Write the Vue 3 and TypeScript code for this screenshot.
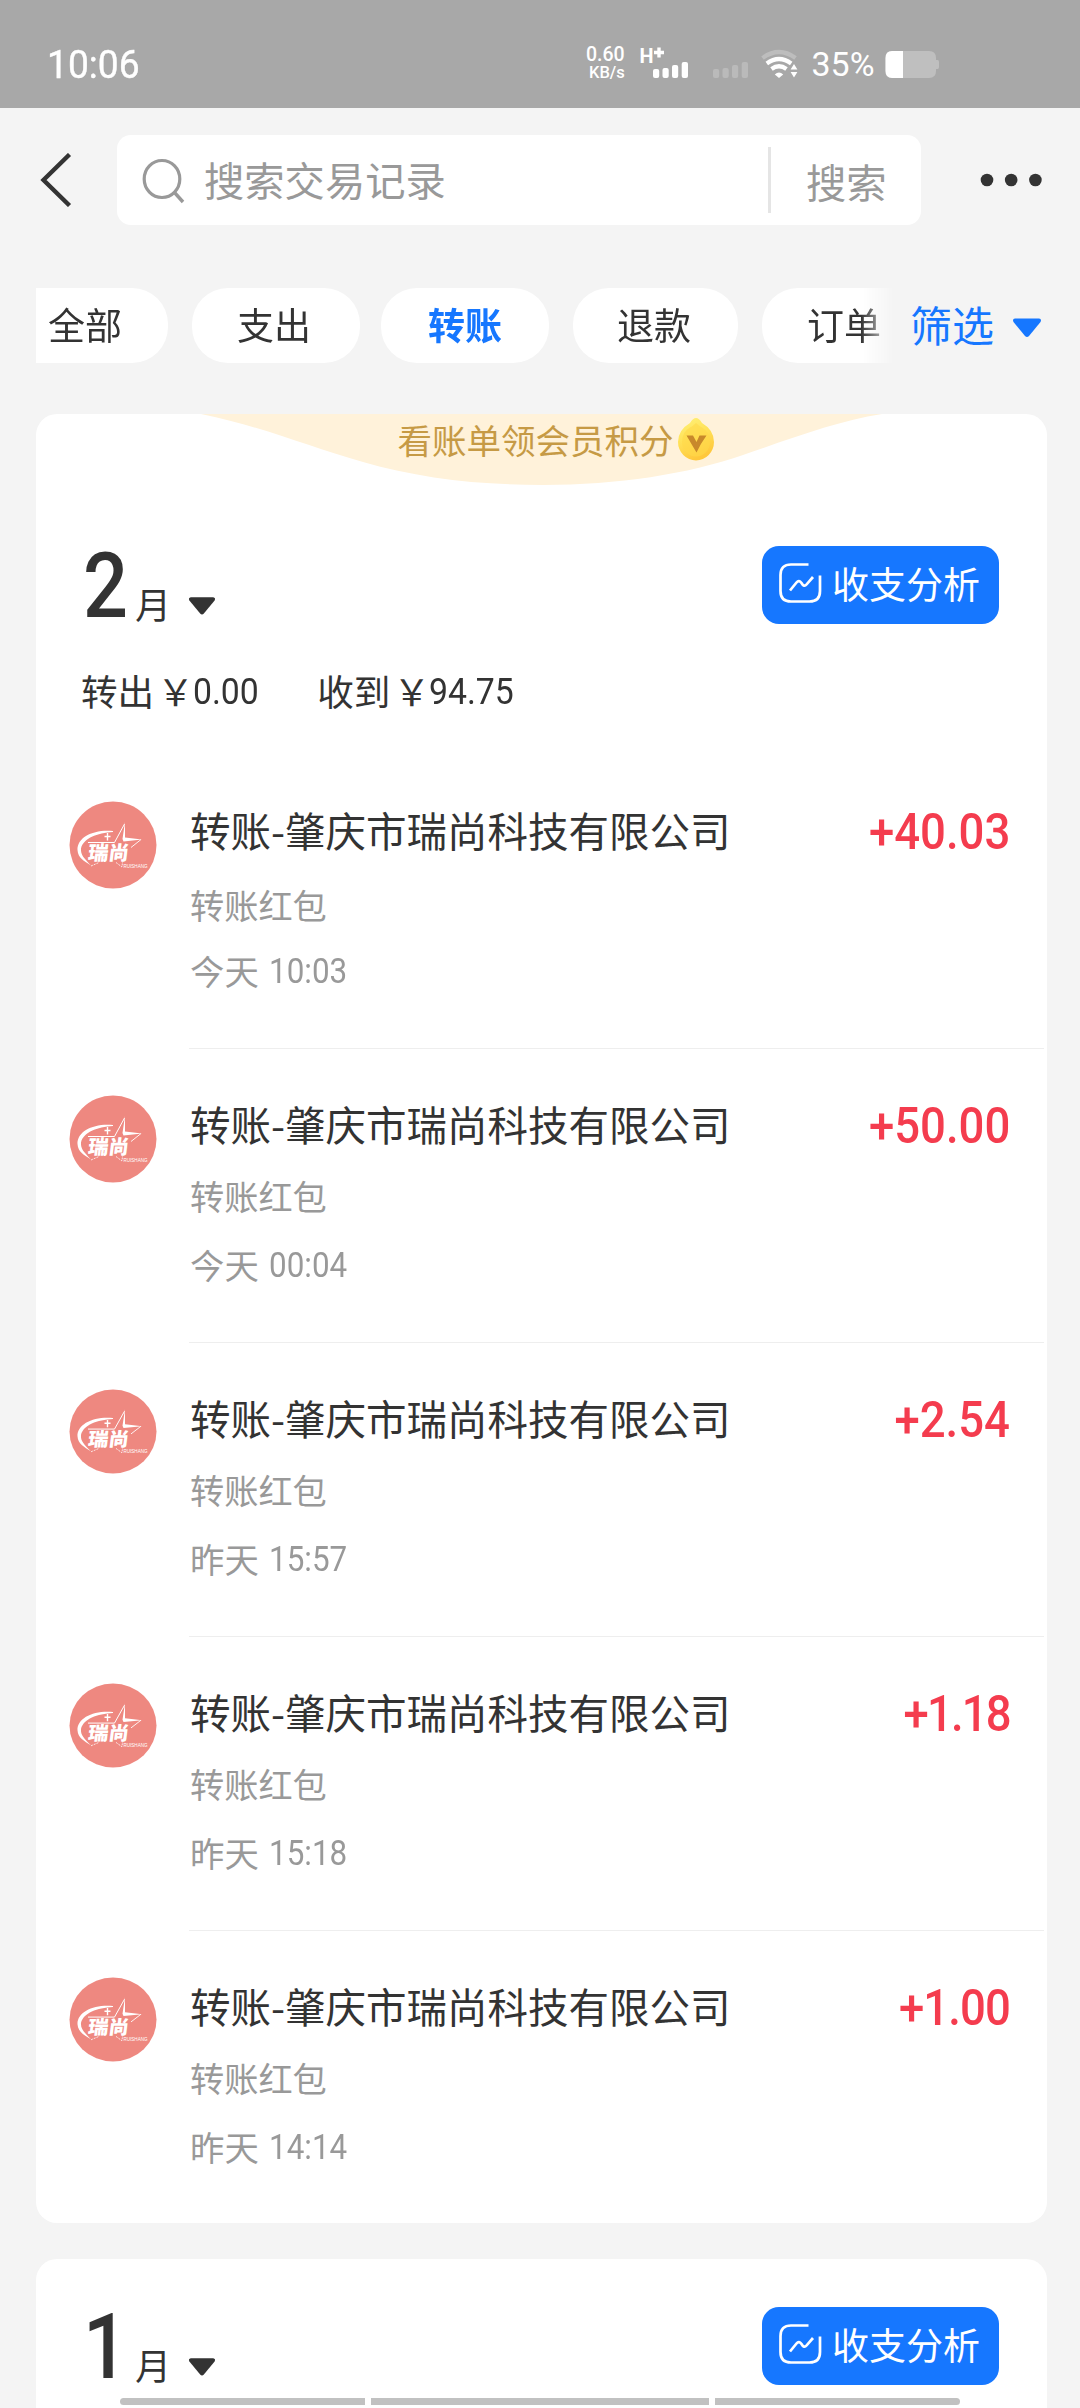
<script setup lang="ts">
interface Bill {
  title: string
  note: string
  day: string
  time: string
  amount: string
}

const tabs: { label: string; cls: string }[] = [
  { label: '全部', cls: 'first' },
  { label: '支出', cls: '' },
  { label: '转账', cls: 'active' },
  { label: '退款', cls: 'narrow' },
  { label: '订单', cls: 'last' },
]

const company = '转账-肇庆市瑞尚科技有限公司'
const bills: Bill[] = [
  { title: company, note: '转账红包', day: '今天', time: '10:03', amount: '+40.03' },
  { title: company, note: '转账红包', day: '今天', time: '00:04', amount: '+50.00' },
  { title: company, note: '转账红包', day: '昨天', time: '15:57', amount: '+2.54' },
  { title: company, note: '转账红包', day: '昨天', time: '15:18', amount: '+1.18' },
  { title: company, note: '转账红包', day: '昨天', time: '14:14', amount: '+1.00' },
]

function tracking(text: string, step: number): string {
  const ones = text.split('1').length - 1
  return `${-(ones * step) / text.length}px`
}
</script>

<template>
  <div class="page">
    <header class="status">
      <span class="clock">10:06</span>
      <div class="speed"><span>0.60</span><span class="unit">KB/s</span></div>
      <svg class="sys" width="290" height="40" viewBox="636 44 290 40">
        <text x="639.5" y="63" class="net" textLength="14" lengthAdjust="spacingAndGlyphs">H</text>
        <path d="M654 52.5h10M659 47.5v10" stroke="#fff" stroke-width="3.4" />
        <g fill="#fff">
          <rect x="653" y="69" width="6.2" height="9" rx="2" />
          <rect x="662.5" y="68" width="6.2" height="10" rx="2" />
          <rect x="672" y="65" width="6.2" height="13" rx="2" />
          <rect x="681.7" y="62" width="6.3" height="16" rx="2" />
        </g>
        <g fill="#bababa">
          <rect x="713" y="69" width="6.2" height="9" rx="2" />
          <rect x="722.5" y="68" width="6.2" height="10" rx="2" />
          <rect x="732" y="65" width="6.2" height="13" rx="2" />
          <rect x="741.7" y="62" width="6.3" height="16" rx="2" />
        </g>
        <g fill="none" stroke-width="4.2">
          <path d="M762.5 58Q779 46 795.500 58" stroke="#bdbdbd" />
          <path d="M766.8 63.500Q779 54.500 791.200 63.500" stroke="#fff" />
          <path d="M771.500 69Q779 63.500 786.500 69" stroke="#fff" />
        </g>
        <path d="M774.800 74.500Q779 70.500 783.200 74.500L779 78z" fill="#fff" />
        <path d="M794 64l3.400 5.500h-6.800zM794 77.500l3.400-5.500h-6.800z" fill="#fff" />
        <text x="811.500" y="76" class="pct" textLength="63" lengthAdjust="spacingAndGlyphs">35%</text>
        <path d="M892 51H929Q936 51 936 58V60H937.500Q939 60 939 62V67Q939 69 937.500 69H936V71Q936 78 929 78H892Q885.500 78 885.500 71V58Q885.500 51 892 51z" fill="#bfbfbf" />
        <path d="M903 51H892Q885.500 51 885.500 58V71Q885.500 78 892 78H903z" fill="#fff" />
      </svg>
    </header>

    <nav class="top">
      <svg class="back" width="32" height="54" viewBox="0 0 32 54">
        <path d="M29.500 1.500L3.500 27L29.500 52.500" fill="none" stroke="#333" stroke-width="4.400" />
      </svg>
      <div class="search">
        <svg class="glass" width="44" height="48" viewBox="0 0 44 48">
          <ellipse cx="21" cy="22" rx="17.800" ry="18.500" fill="none" stroke="#999" stroke-width="3.200" />
          <path d="M33.500 35.500L42 45" stroke="#999" stroke-width="3.400" />
        </svg>
        <span class="placeholder">搜索交易记录</span>
        <span class="bar"></span>
        <span class="go">搜索</span>
      </div>
      <svg class="more" width="64" height="14" viewBox="0 0 64 14">
        <circle cx="8" cy="7" r="6.300" /><circle cx="32.200" cy="7" r="6.300" /><circle cx="56.400" cy="7" r="6.300" />
      </svg>
    </nav>

    <div class="filters">
      <div class="tabs">
        <span v-for="t in tabs" :key="t.label" class="tab" :class="t.cls">{{ t.label }}</span>
      </div>
      <span class="filter">筛选</span>
      <svg class="tri blue" width="30" height="20" viewBox="0 0 30 20"><path d="M3 .5H27Q30 1 28.500 4L17 18Q15 20 13 18L1.500 4Q0 1 3 .5z" fill="#1677ff" /></svg>
    </div>

    <section class="card">
      <div class="promo">
        <svg class="curve" width="690" height="72" viewBox="0 0 690 72">
          <path d="M3 0C70 14 110 33 165 48C220 64 280 71 345 71C420 71 490 60 545 41C600 22 640 7 684 0z" fill="#fff2da" />
        </svg>
        <span class="promo-text">看账单领会员积分</span>
        <svg class="coin" width="38" height="45" viewBox="0 0 38 45">
          <defs>
            <linearGradient id="gold" x1="0" y1="0" x2=".4" y2="1">
              <stop offset="0" stop-color="#fff27a" /><stop offset=".5" stop-color="#ffe259" /><stop offset="1" stop-color="#ffc83c" />
            </linearGradient>
          </defs>
          <path d="M19 1Q22 1 25 6Q37 13 37 25A18 18.500 0 0 1 1 25Q1 13 13 6Q16 1 19 1z" fill="url(#gold)" />
          <path d="M19 6Q22 9 25 10.500Q33 15 33 25A14 14.500 0 0 1 5 25Q5 15 13 10.500Q16 9 19 6z" fill="#ffd84a" opacity=".6" />
          <path d="M9.500 18.500H16L19.500 25L22.500 18.500H29.500Q24 26 19.500 35.500Q15 28 9.500 18.500z" fill="#c8892b" />
        </svg>
      </div>

      <div class="month">
        <span class="num">2</span><span class="yue">月</span>
        <svg class="tri" width="28" height="20" viewBox="0 0 30 20"><path d="M3 .5H27Q30 1 28.500 4L17 18Q15 20 13 18L1.500 4Q0 1 3 .5z" fill="#333" /></svg>
        <button class="analysis">
          <svg width="43" height="40" viewBox="0 0 43 40" fill="none" stroke="#fff">
            <path d="M29.500 1.500H12Q1.500 1.500 1.500 12V28Q1.500 38.500 12 38.500H30.500Q41 38.500 41 28V12.500" stroke-width="2.700" />
            <path d="M11 27.500L17.500 19.500Q20 16.500 22.500 20Q25 24.500 27.500 21.500L34 14" stroke-width="2.700" />
          </svg>
          <span>收支分析</span>
        </button>
      </div>

      <div class="summary">
        <span class="cjk">转出<span class="yen">￥</span></span><span class="dig out">0.00</span>
        <span class="cjk">收到<span class="yen">￥</span></span><span class="dig">94.75</span>
      </div>

      <ul class="bills">
        <li v-for="(b, i) in bills" :key="i" class="bill" :class="{ lead: i === 0 }">
          <svg class="avatar" width="88" :height="i < 2 ? 88 : 85" viewBox="0 0 88 88" preserveAspectRatio="none">
            <ellipse cx="44" cy="44" rx="43.500" ry="43.500" fill="#ee8880" />
            <path d="M44 30C25 28 8 36 8.500 49C9 57 15 60 22 64.500C15 57 11.500 54 12 47.500C14.500 37 28 32 44 31z" fill="#fff" />
            <path d="M19 41.500H45.500L55.500 23" fill="none" stroke="#fff" stroke-width="1" />
            <path d="M72 38.500L62 46.500" fill="none" stroke="#fff" stroke-width=".9" />
            <path d="M56 21V36.500L73 38.500L54.500 40.500L53.500 38z" fill="#fff" />
            <path d="M38.500 32V39.500M35.500 35.500H41.500" stroke="#fff" stroke-width="1.400" />
            <path d="M22 65L30 61.500M47 61.500L53 66L53.500 61" fill="none" stroke="#fff" stroke-width=".8" stroke-dasharray="2 1" />
            <text x="19" y="59.500" class="logo" textLength="41" lengthAdjust="spacingAndGlyphs" transform="translate(6.500 0) skewX(-7)">瑞尚</text>
            <text x="54.500" y="66.500" class="logo-en" textLength="24" lengthAdjust="spacingAndGlyphs">RUISHANG</text>
          </svg>
          <div class="body">
            <div class="title"><span>{{ b.title }}</span><span class="amount" :style="{ letterSpacing: tracking(b.amount, 5) }">{{ b.amount }}</span></div>
            <div class="note">{{ b.note }}</div>
            <div class="when"><span>{{ b.day }}</span><span class="time">{{ b.time }}</span></div>
          </div>
        </li>
      </ul>
    </section>

    <section class="card next">
      <div class="month">
        <span class="num">1</span><span class="yue">月</span>
        <svg class="tri" width="28" height="20" viewBox="0 0 30 20"><path d="M3 .5H27Q30 1 28.500 4L17 18Q15 20 13 18L1.500 4Q0 1 3 .5z" fill="#333" /></svg>
        <button class="analysis">
          <svg width="43" height="40" viewBox="0 0 43 40" fill="none" stroke="#fff">
            <path d="M29.500 1.500H12Q1.500 1.500 1.500 12V28Q1.500 38.500 12 38.500H30.500Q41 38.500 41 28V12.500" stroke-width="2.700" />
            <path d="M11 27.500L17.500 19.500Q20 16.500 22.500 20Q25 24.500 27.500 21.500L34 14" stroke-width="2.700" />
          </svg>
          <span>收支分析</span>
        </button>
      </div>
    </section>

    <div class="gesture"><i class="left"></i><i class="mid"></i><i class="right"></i></div>
  </div>
</template>

<style>
body { margin: 0; background: #f4f4f4; }
</style>

<style scoped>
.page {
  position: relative;
  width: 1080px;
  height: 2408px;
  overflow: hidden;
  background: #f4f4f4;
  color: #333;
  font-family: "Noto Sans CJK SC", sans-serif;
  white-space: nowrap;
}
.page svg { display: block; flex: none; }
.status {
  display: flex;
  height: 108px;
  background: #a8a8a8;
  color: #fff;
  font-family: Roboto, sans-serif;
}
.clock {
  width: 539px;
  margin: 42px 0 0 47px;
  font-size: 38.500px;
  line-height: 46px;
  font-weight: 400;
  -webkit-text-stroke: .4px #fff;
  transform: scaleX(.965);
  transform-origin: left;
}
.speed {
  width: 50px;
  margin-top: 46px;
  font-size: 19.500px;
  line-height: 18px;
  font-weight: 500;
  display: flex;
  flex-direction: column;
}
.speed .unit { padding-left: 3px; font-size: 16.500px; line-height: 17px; }
.sys { margin: 44px 0 0 0; overflow: visible; }
.net { font: 700 21px Roboto, sans-serif; fill: #fff; }
.pct { font: 400 33.500px Roboto, sans-serif; fill: #fff; }

.top { display: flex; height: 144px; align-items: center; }
.back { margin: 0 0 0 40px; }
.search {
  display: flex;
  align-items: center;
  width: 804px;
  height: 90px;
  margin-left: 45px;
  border-radius: 14px;
  background: #fff;
  color: #999;
  font-size: 40.300px;
  line-height: 48px;
}
.glass { margin: 2px 0 0 24px; }
.placeholder { width: 564px; margin: -3px 0 0 19px; }
.bar { width: 3px; height: 66px; background: #e5e5e5; }
.go { margin: 2px 0 0 35px; }
.more { margin-left: 57.500px; fill: #333; }

.filters { display: flex; height: 75px; margin: 36px 0 0 36px; align-items: center; }
.tabs {
  display: flex;
  width: 859px;
  height: 75px;
  overflow: hidden;
  -webkit-mask-image: linear-gradient(90deg, #000 825px, transparent 859px);
  mask-image: linear-gradient(90deg, #000 825px, transparent 859px);
}
.tab {
  flex: none;
  box-sizing: border-box;
  width: 168px;
  height: 75px;
  margin-right: 23px;
  padding-left: 45px;
  border-radius: 36px;
  background: #fff;
  font-size: 37px;
  line-height: 73px;
}
.tab.first { width: 132px; padding-left: 12px; border-radius: 0 36px 36px 0; margin-right: 24px; }
.tab:nth-child(2) { margin-right: 21px; }
.tab.active { color: #1677ff; font-weight: 700; padding-left: 47px; margin-right: 24px; }
.tab.narrow { width: 165px; padding-left: 44px; margin-right: 24px; }
.filter { width: 101px; margin: -4px 0 0 15px; color: #1677ff; font-size: 42px; line-height: 60px; }
.blue { margin-left: 1px; }

.card { position: relative; box-sizing: border-box; width: 1011px; height: 1809px; margin: 51px 0 0 36px; background: #fff; border-radius: 21px; overflow: hidden; }
.card.next { height: 240px; margin-top: 36px; }
.card.next .month { margin-top: -12px; }
.promo { position: relative; display: flex; height: 72px; align-items: flex-start; }
.curve { position: absolute; left: 162px; top: 0; }
.promo-text { position: relative; margin-left: 361.500px; font-size: 34.500px; line-height: 50px; color: #c69a45; }
.coin { position: relative; margin: 3px 0 0 3px; }

.month { display: flex; height: 170px; }
.num { width: 51px; margin: 47px 0 0 47px; font: 500 91px/107px Roboto, sans-serif; transform: scaleX(.87); transform-origin: left; }
.yue { width: 53px; margin: 95px 0 0 1px; font-size: 36px; line-height: 44px; }
.tri { margin-top: 110px; }
.filters .tri { margin-top: 4px; }
.analysis {
  display: flex;
  flex: none;
  align-items: flex-start;
  box-sizing: border-box;
  width: 237px;
  height: 78px;
  margin: 60px 0 0 546px;
  padding: 17px 0 0 17px;
  border: 0;
  border-radius: 17px;
  background: #1677ff;
  color: #fff;
  font: 400 37px/44px "Noto Sans CJK SC", sans-serif;
}
.analysis span { margin: -2px 0 0 10px; }

.summary { display: flex; height: 99px; padding-left: 45px; font-size: 36.600px; }
.cjk { line-height: 69px; }
.yen { position: relative; left: 3px; }
.dig { font: 400 37.500px/71px Roboto, sans-serif; transform: scaleX(.9); transform-origin: left; margin-left: 2px; }
.dig.out { width: 124.500px; }

.bills { margin: 0; padding: 0; list-style: none; }
.bill { display: flex; height: 294px; padding-left: 32.500px; }
.avatar { margin-top: 46px; }
.logo { font: 900 19.500px "Noto Sans CJK SC", sans-serif; fill: #fff; }
.logo-en { font: 400 5.500px "Liberation Sans", sans-serif; fill: #fff; }
.body { box-sizing: border-box; width: 855px; height: 294px; margin-left: 32.500px; padding: 50px 0 0 1px; border-bottom: 1.500px solid #eee; }
.bill:last-child .body { border: 0; }
.title { display: flex; justify-content: space-between; font-size: 40.500px; line-height: 50px; height: 50px; }
.amount { margin-right: 34px; color: #f43c4e; font: 500 50px/55px Roboto, sans-serif; transform: scaleX(.91); transform-origin: right; }
.note { margin-top: 26px; height: 40px; font-size: 34.200px; line-height: 40px; color: #999; }
.lead .note { margin: 29px 0 -3px; }
.when { display: flex; margin-top: 29px; font-size: 34.400px; line-height: 40px; color: #999; }
.time { margin-left: 10px; font: 400 34.500px/43px Roboto, sans-serif; transform: scaleX(.91); transform-origin: left; }

.gesture { position: absolute; left: 120px; bottom: 3px; display: flex; gap: 6px; }
.gesture i { height: 7px; background: #c1c1c1; }
.left { width: 245px; border-radius: 4px 0 0 4px; }
.mid { width: 338px; }
.right { width: 245px; border-radius: 0 4px 4px 0; }
</style>
